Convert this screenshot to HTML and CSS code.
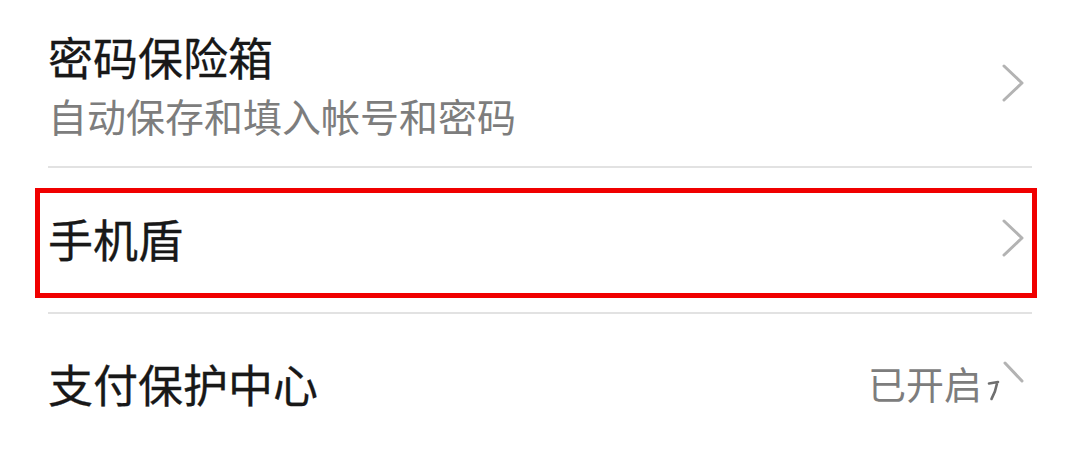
FILE: index.html
```html
<!DOCTYPE html>
<html lang="zh-CN">
<head>
<meta charset="utf-8">
<title>安全设置</title>
<link rel="stylesheet" href="styles.css">
</head>
<body>
<div class="list">
  <div class="row row-vault">
    <div class="texts">
      <div class="title">密码保险箱</div>
      <div class="subtitle">自动保存和填入帐号和密码</div>
    </div>
    <svg class="chevron" viewBox="0 0 24 40" width="24" height="40"><path d="M3 3 L21 20 L3 37"/></svg>
  </div>
  <div class="divider"></div>
  <div class="row row-shield">
    <div class="title title-shift">手机盾</div>
    <svg class="chevron chevron-up" viewBox="0 0 24 40" width="24" height="40"><path d="M3 3 L21 20 L3 37"/></svg>
    <div class="highlight"></div>
  </div>
  <div class="divider"></div>
  <div class="row row-pay">
    <div class="title title-shift2">支付保护中心</div>
    <div class="status">
      <span class="status-text">已开启</span>
      <svg class="chevron-glitch" viewBox="0 0 40 44" width="40" height="44"><path d="M20 4 L37 22"/><path class="glitch" d="M4 24.5 L13 23 M12 24.5 Q10.5 33 6.5 40"/></svg>
    </div>
  </div>
</div>
</body>
</html>
```

FILE: styles.css
```css
html, body {
  margin: 0;
  padding: 0;
  background: #ffffff;
}

body {
  width: 1080px;
  height: 449px;
  overflow: hidden;
  font-family: "Noto Sans CJK SC", "Noto Sans", sans-serif;
  color: #1b1b1b;
}

.list {
  margin: 0 48px;
  display: flex;
  flex-direction: column;
}

.row {
  position: relative;
  display: flex;
  align-items: center;
  justify-content: space-between;
}

.row-vault {
  height: 166px;
}

.row-shield {
  height: 144px;
}

.row-pay {
  height: 140px;
}

.texts {
  align-self: flex-start;
  padding-top: 27px;
  display: flex;
  flex-direction: column;
  gap: 4px;
}

.title {
  font-size: 45px;
  line-height: 60px;
  font-weight: 400;
  color: #181818;
  white-space: nowrap;
  -webkit-text-stroke: 0.3px #181818;
}

.title-shift {
  margin-top: -2px;
}

.title-shift2 {
  margin-top: 0;
}

.subtitle {
  font-size: 39px;
  line-height: 48px;
  color: #7d7d7d;
  white-space: nowrap;
}

.chevron {
  margin-right: 7px;
  display: block;
}

.chevron-up {
  margin-top: -4px;
}

.chevron path,
.chevron-glitch path {
  fill: none;
  stroke: #b3b3b3;
  stroke-width: 3;
  stroke-linecap: round;
  stroke-linejoin: round;
}

.chevron-glitch .glitch {
  stroke: #6f6f6f;
  stroke-width: 2.6;
}

.divider {
  height: 2px;
  background: #e2e2e2;
}

.highlight {
  position: absolute;
  left: -13px;
  top: 20px;
  width: 992px;
  height: 100px;
  border: 5px solid #f00000;
}

.status {
  display: flex;
  align-items: center;
  margin-right: 7px;
  margin-top: -2px;
}

.status-text {
  font-size: 38px;
  line-height: 48px;
  color: #7d7d7d;
  white-space: nowrap;
}

.chevron-glitch {
  display: block;
  margin-left: 3px;
  margin-top: -4px;
}
```
